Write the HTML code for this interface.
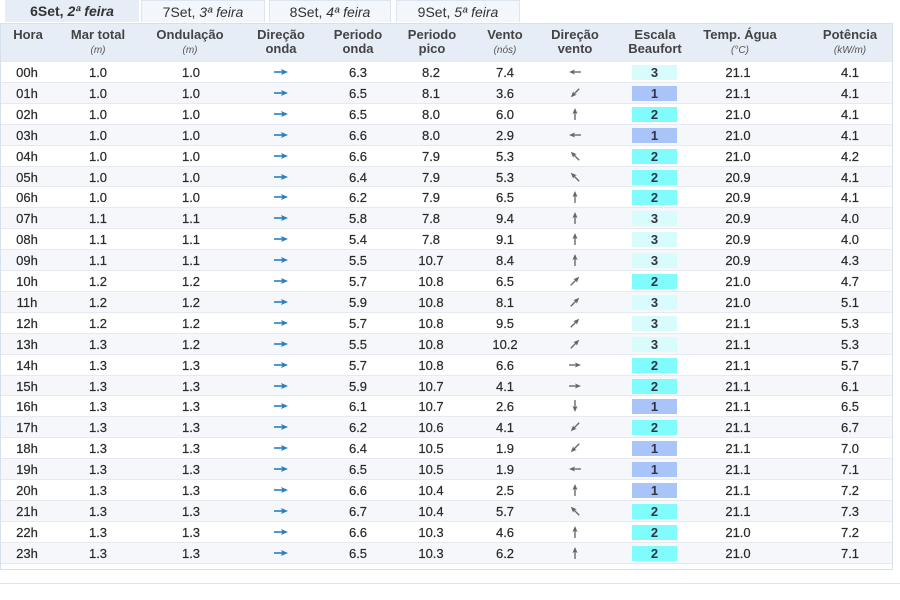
<!DOCTYPE html>
<html><head><meta charset="utf-8"><style>
body{margin:0;width:900px;height:600px;background:#fff;font-family:"Liberation Sans",sans-serif;position:relative;overflow:hidden;color:#333}
.tab{position:absolute;top:0;height:22px;line-height:22px;font-size:14px;text-align:center;background:#f3f6fa;border:1px solid #dde6f0;border-bottom:none;color:#333;box-sizing:border-box}
.tab i{font-style:italic}
.act{background:#e6edf6;font-weight:bold;border:none}
.frame{position:absolute;left:0;top:23px;width:893px;height:547px;border:1px solid #d6e1ec;box-sizing:border-box}
.hdr{position:absolute;left:1px;top:24px;width:891px;height:37px;background:#e6edf6}
.h{position:absolute;top:28px;text-align:center;font-weight:bold;font-size:13px;line-height:14px;color:#444;transform:translateX(-50%);white-space:nowrap}
.h small{font-weight:normal;font-style:italic;font-size:10px;color:#555}
.row{position:absolute;left:1px;width:891px;height:21px;border-top:1px solid #e6eaf0;box-sizing:border-box}
.c{position:absolute;font-size:13px;line-height:21px;transform:translateX(-50%);white-space:nowrap;color:#2a2a2a;-webkit-text-stroke:0.2px #2a2a2a}
.bf{position:absolute;left:631px;width:45px;height:15px;top:3px;text-align:center;font-weight:bold;font-size:13px;line-height:15px;color:#334}
svg{position:absolute}
</style></head><body>
<div class="tab act" style="left:5px;width:134px">6Set, <i>2ª feira</i></div>
<div class="tab" style="left:141px;width:124px">7Set, <i>3ª feira</i></div>
<div class="tab" style="left:269px;width:122px">8Set, <i>4ª feira</i></div>
<div class="tab" style="left:396px;width:124px">9Set, <i>5ª feira</i></div>
<div class="frame"></div>
<div class="hdr"></div>
<div class="h" style="left:28px">Hora</div>
<div class="h" style="left:98px">Mar total<br><small>(m)</small></div>
<div class="h" style="left:190px">Ondulação<br><small>(m)</small></div>
<div class="h" style="left:281px">Direção<br>onda</div>
<div class="h" style="left:358px">Periodo<br>onda</div>
<div class="h" style="left:432px">Periodo<br>pico</div>
<div class="h" style="left:505px">Vento<br><small>(nós)</small></div>
<div class="h" style="left:575px">Direção<br>vento</div>
<div class="h" style="left:655px">Escala<br>Beaufort</div>
<div class="h" style="left:740px">Temp. Água<br><small>(°C)</small></div>
<div class="h" style="left:850px">Potência<br><small>(kW/m)</small></div>
<div style="position:absolute;left:0;top:583px;width:900px;border-top:1px solid #dde6ee"></div>
<div id="rows"></div>
<script>
var d=[
["00h","1.0","1.0","6.3","8.2","7.4",180,3,"21.1","4.1"],
["01h","1.0","1.0","6.5","8.1","3.6",135,1,"21.1","4.1"],
["02h","1.0","1.0","6.5","8.0","6.0",-90,2,"21.0","4.1"],
["03h","1.0","1.0","6.6","8.0","2.9",180,1,"21.0","4.1"],
["04h","1.0","1.0","6.6","7.9","5.3",-135,2,"21.0","4.2"],
["05h","1.0","1.0","6.4","7.9","5.3",-135,2,"20.9","4.1"],
["06h","1.0","1.0","6.2","7.9","6.5",-90,2,"20.9","4.1"],
["07h","1.1","1.1","5.8","7.8","9.4",-90,3,"20.9","4.0"],
["08h","1.1","1.1","5.4","7.8","9.1",-90,3,"20.9","4.0"],
["09h","1.1","1.1","5.5","10.7","8.4",-90,3,"20.9","4.3"],
["10h","1.2","1.2","5.7","10.8","6.5",-45,2,"21.0","4.7"],
["11h","1.2","1.2","5.9","10.8","8.1",-45,3,"21.0","5.1"],
["12h","1.2","1.2","5.7","10.8","9.5",-45,3,"21.1","5.3"],
["13h","1.3","1.2","5.5","10.8","10.2",-45,3,"21.1","5.3"],
["14h","1.3","1.3","5.7","10.8","6.6",0,2,"21.1","5.7"],
["15h","1.3","1.3","5.9","10.7","4.1",0,2,"21.1","6.1"],
["16h","1.3","1.3","6.1","10.7","2.6",90,1,"21.1","6.5"],
["17h","1.3","1.3","6.2","10.6","4.1",135,2,"21.1","6.7"],
["18h","1.3","1.3","6.4","10.5","1.9",135,1,"21.1","7.0"],
["19h","1.3","1.3","6.5","10.5","1.9",180,1,"21.1","7.1"],
["20h","1.3","1.3","6.6","10.4","2.5",-90,1,"21.1","7.2"],
["21h","1.3","1.3","6.7","10.4","5.7",-135,2,"21.1","7.3"],
["22h","1.3","1.3","6.6","10.3","4.6",-90,2,"21.0","7.2"],
["23h","1.3","1.3","6.5","10.3","6.2",-90,2,"21.0","7.1"]];
var bc={1:"#a8c4f8",2:"#80fcfc",3:"#d8fcfc"};
var arr='<path d="M-7,0 L3,0" stroke="COL" stroke-width="1.6"/><path d="M0,-3 L7,0 L0,3 L1.5,0 Z" fill="COL"/>';
var h="";
d.forEach(function(r,i){
var top=61+i*20.9;
h+='<div class="row" style="top:'+top+'px;background:'+(i%2?'#f5f7fa':'#fff')+'">'+
'<div class="c" style="left:26px">'+r[0]+'</div>'+
'<div class="c" style="left:97px">'+r[1]+'</div>'+
'<div class="c" style="left:190px">'+r[2]+'</div>'+
'<svg width="20" height="20" style="left:270px;top:0"><g transform="translate(10,10)">'+arr.replace(/COL/g,"#2a7fc0")+'</g></svg>'+
'<div class="c" style="left:357px">'+r[3]+'</div>'+
'<div class="c" style="left:430px">'+r[4]+'</div>'+
'<div class="c" style="left:504px">'+r[5]+'</div>'+
'<svg width="20" height="20" style="left:564px;top:0"><g transform="translate(10,10) rotate('+r[6]+') scale(0.85)">'+arr.replace(/COL/g,"#666")+'</g></svg>'+
'<div class="bf" style="background:'+bc[r[7]]+'">'+r[7]+'</div>'+
'<div class="c" style="left:737px">'+r[8]+'</div>'+
'<div class="c" style="left:849px">'+r[9]+'</div></div>';});
h+='<div class="row" style="top:'+(61+24*20.9)+'px;height:1px"></div>';
document.getElementById("rows").innerHTML=h;
</script>
</body></html>
